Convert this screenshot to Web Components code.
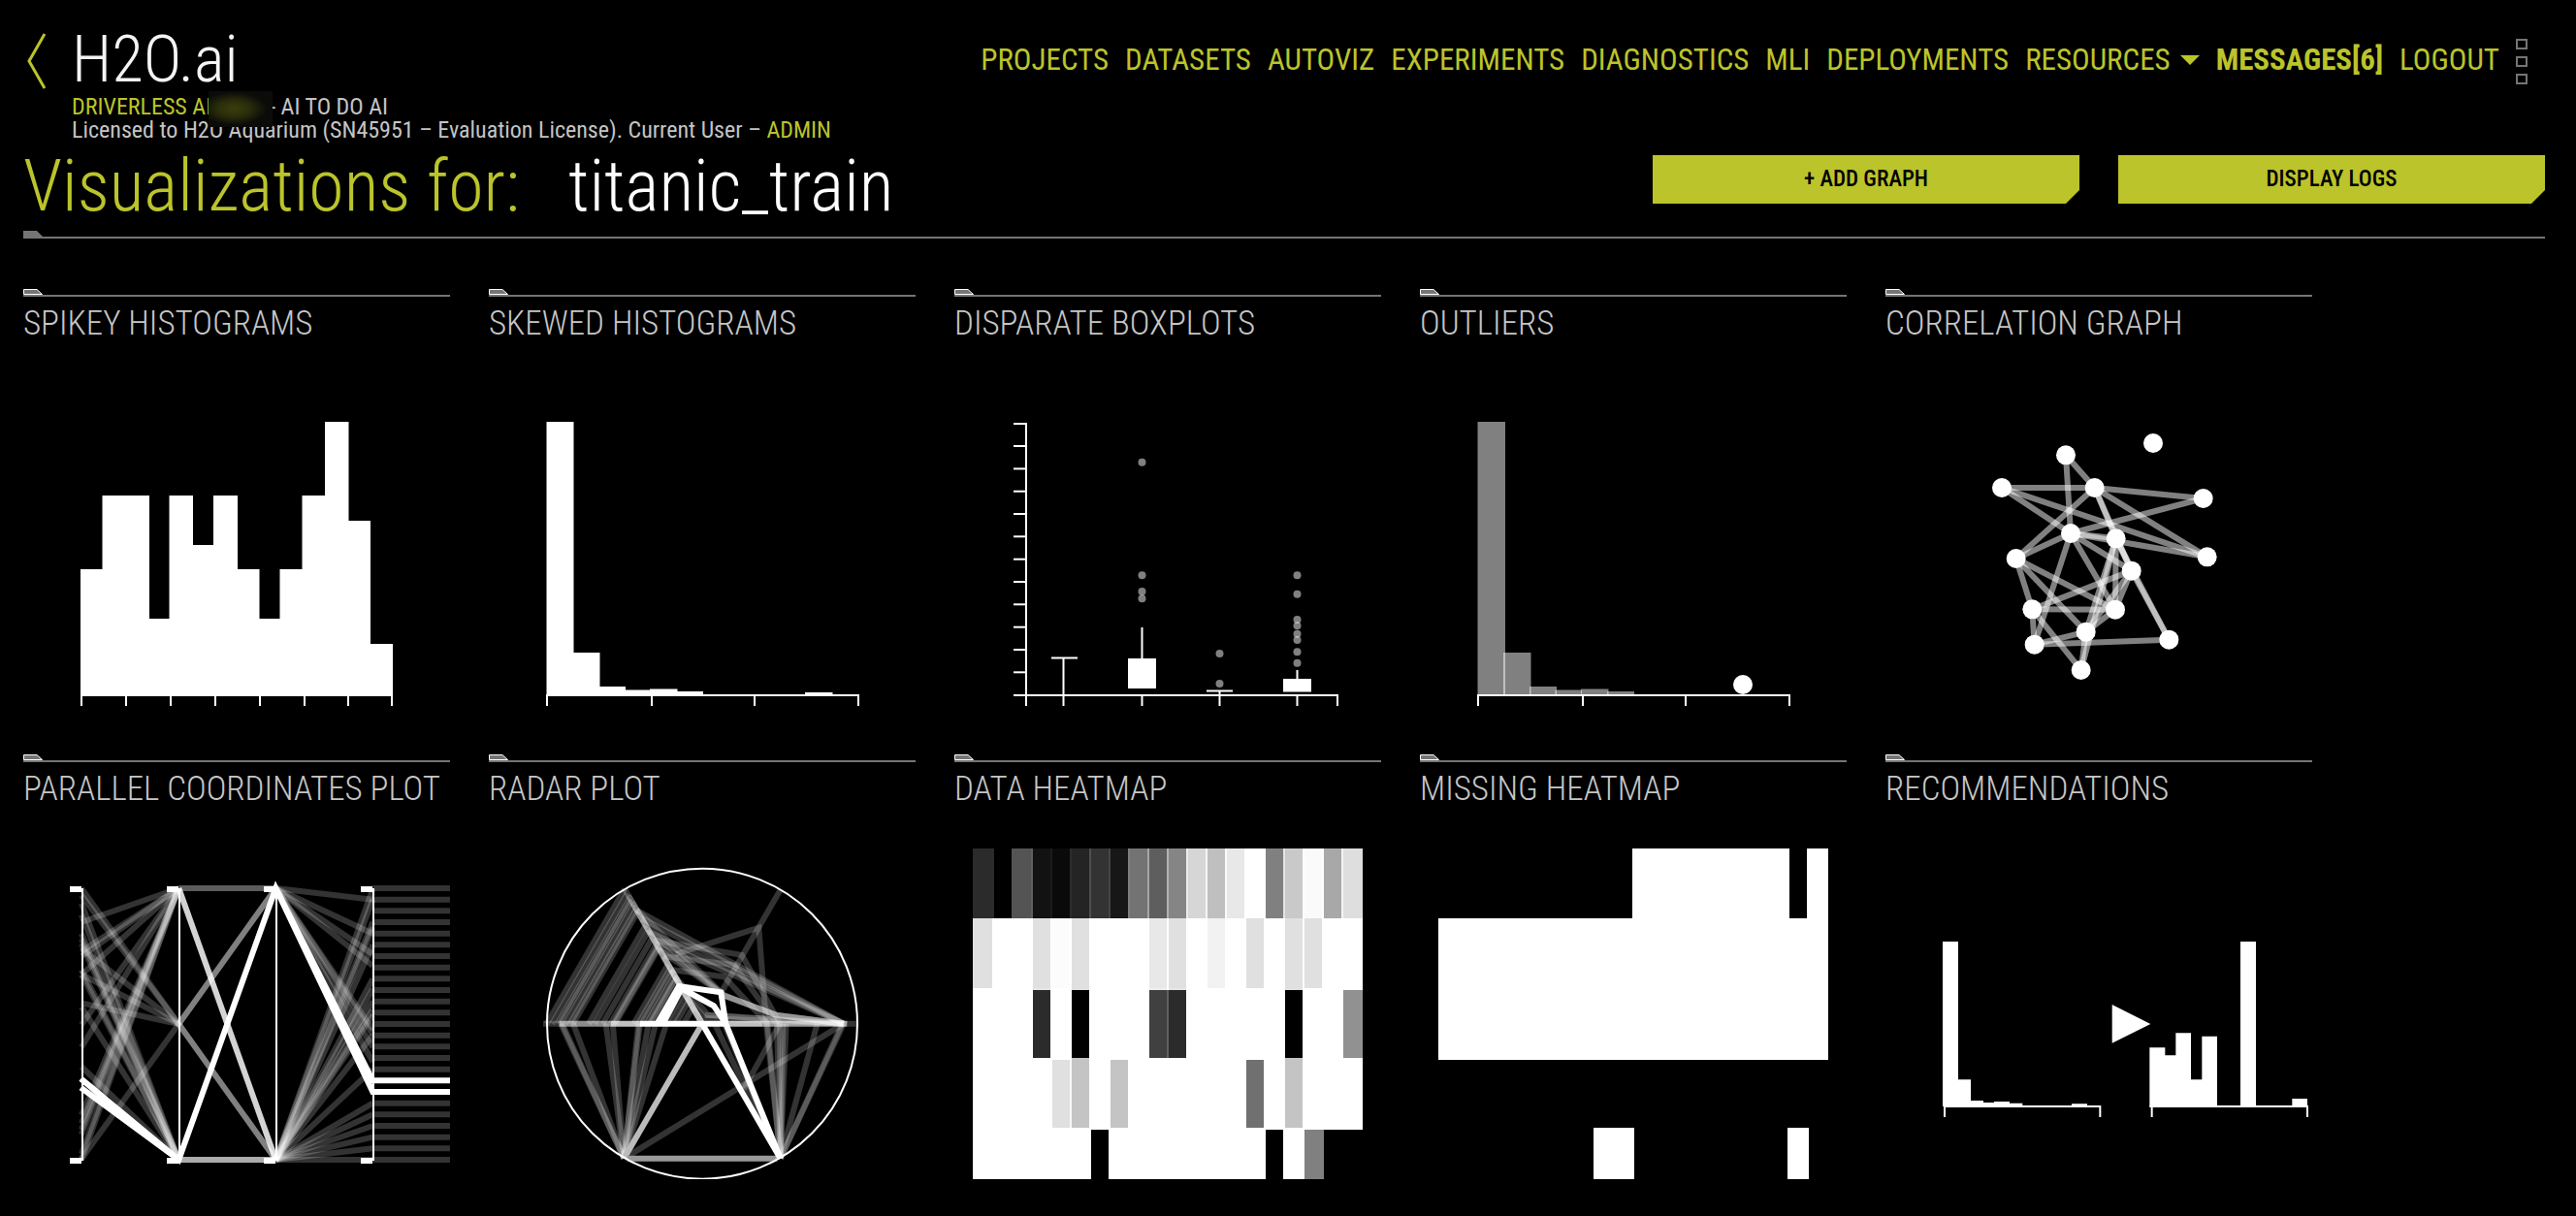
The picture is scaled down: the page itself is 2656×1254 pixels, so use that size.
<!DOCTYPE html>
<html lang="en">
<head>
<meta charset="utf-8">
<title>H2O Driverless AI – Visualizations</title>
<style>
  html { background: #000; }
  body {
    margin: 0;
    background: #000;
    color: #c4c4c4;
    font-family: "Roboto Condensed", Roboto, "Liberation Sans", sans-serif;
    --lime: #bbc42a;
    --line: #757575;
  }
</style>
</head>
<body>
<viz-page>
  <app-header slot="header"></app-header>
  <page-title slot="title" label="Visualizations for:" name="titanic_train">
    <action-button>+ ADD GRAPH</action-button>
    <action-button>DISPLAY LOGS</action-button>
  </page-title>
  <viz-card label="SPIKEY HISTOGRAMS" chart="spikey"></viz-card>
  <viz-card label="SKEWED HISTOGRAMS" chart="skewed"></viz-card>
  <viz-card label="DISPARATE BOXPLOTS" chart="boxplots"></viz-card>
  <viz-card label="OUTLIERS" chart="outliers"></viz-card>
  <viz-card label="CORRELATION GRAPH" chart="correlation"></viz-card>
  <viz-card label="PARALLEL COORDINATES PLOT" chart="parallel"></viz-card>
  <viz-card label="RADAR PLOT" chart="radar"></viz-card>
  <viz-card label="DATA HEATMAP" chart="heatmap"></viz-card>
  <viz-card label="MISSING HEATMAP" chart="missing"></viz-card>
  <viz-card label="RECOMMENDATIONS" chart="recommend"></viz-card>
</viz-page>

<script>
const base = (el, html) => { el.attachShadow({ mode: 'open' }).innerHTML = html; };

/* ---------- page frame ---------- */
customElements.define('viz-page', class extends HTMLElement {
  constructor() {
    super();
    base(this, `<style>
      :host { display: block; padding: 25px 32px 38px 24px; }
      main { display: grid; grid-template-columns: repeat(auto-fill, 440px); gap: 40px; padding-top: 50px; }
    </style>
    <slot name="header"></slot>
    <slot name="title"></slot>
    <main><slot></slot></main>`);
  }
});

/* ---------- header with brand and navigation ---------- */
customElements.define('app-header', class extends HTMLElement {
  constructor() {
    super();
    base(this, `<style>
      :host { display: flex; justify-content: space-between; align-items: flex-start; }
      .left { display: flex; align-items: flex-start; }
      .back { display: block; width: 50px; padding: 9px 0 0 4px; box-sizing: border-box; }
      .back svg { display: block; }
      h1 { margin: 0; color: #f4f4f4; font-size: 67px; line-height: 73px; font-weight: 300; }
      p { margin: 0; font-size: 24px; line-height: 24px; white-space: nowrap; }
      .lime, a { color: var(--lime); text-decoration: none; }
      .version { display: inline-block; position: relative; width: 60px; height: 24px; vertical-align: top; }
      .version::after {
        content: ""; position: absolute; left: -3px; top: -4px; width: 66px; height: 37px;
        background: radial-gradient(ellipse 34px 17px at 26px 18px, #3a3e0b 0, #2a2d0a 50%, #0b0b0a 100%);
      }
      nav { display: flex; align-items: flex-start; gap: 17px; padding: 19px 18px 0 0; font-size: 31px; line-height: 36px; }
      nav a, nav button { font-weight: 400; white-space: nowrap; }
      nav button { display: flex; align-items: center; gap: 10px; margin: 0; padding: 0; border: 0; background: none;
        color: var(--lime); font: inherit; cursor: pointer; }
      nav a.strong { font-weight: 700; }
      nav button.menu { align-self: flex-start; flex-direction: column; gap: 7px; margin-top: -4px; }
      .menu i { display: block; width: 12px; height: 11px; box-sizing: border-box; border: 2px solid var(--line); }
    </style>
    <div class="left">
      <a class="back" href="#" aria-label="Back"><svg width="20" height="58" viewBox="0 0 20 58" fill="none" stroke="#bbc42a" stroke-width="3"><path d="M18 1L2 29L18 57"/></svg></a>
      <div>
        <h1>H2O.ai</h1>
        <p><span class="lime">DRIVERLESS AI</span><span class="version"></span>- AI TO DO AI</p>
        <p>Licensed to H2O Aquarium (SN45951 – Evaluation License). Current User – <span class="lime">ADMIN</span></p>
      </div>
    </div>
    <nav>
      <a href="#">PROJECTS</a><a href="#">DATASETS</a><a href="#">AUTOVIZ</a><a href="#">EXPERIMENTS</a>
      <a href="#">DIAGNOSTICS</a><a href="#">MLI</a><a href="#">DEPLOYMENTS</a>
      <button type="button">RESOURCES<svg width="20" height="10" viewBox="0 0 20 10" fill="#bbc42a"><path d="M0 0H20L10 10Z"/></svg></button>
      <a class="strong" href="#">MESSAGES[6]</a><a href="#">LOGOUT</a>
      <button class="menu" type="button" aria-label="More"><i></i><i></i><i></i></button>
    </nav>`);
  }
});

/* ---------- title row ---------- */
customElements.define('page-title', class extends HTMLElement {
  connectedCallback() {
    base(this, `<style>
      :host { display: block; }
      .row { display: flex; justify-content: space-between; align-items: flex-start; }
      h2 { display: flex; gap: 50px; margin: 0; font-size: 74px; line-height: 92px; font-weight: 300; color: #fff; white-space: nowrap; }
      h2 span { color: var(--lime); }
      .actions { display: flex; gap: 40px; padding-top: 14px; }
      .rule { border-bottom: 2px solid var(--line); }
      .rule svg { display: block; }
    </style>
    <div class="row"><h2><span>${this.getAttribute('label')}</span>${this.getAttribute('name')}</h2>
    <div class="actions"><slot></slot></div></div>
    <div class="rule"><svg width="20" height="6" fill="#757575"><path d="M0 0H14L20 6H0Z"/></svg></div>`);
  }
});

customElements.define('action-button', class extends HTMLElement {
  constructor() {
    super();
    base(this, `<style>
      :host { display: block; width: 440px; }
      button { display: block; width: 100%; height: 50px; padding: 0; border: 0; background: var(--lime); color: #000;
        font: 500 23px/50px "Roboto Condensed", Roboto, "Liberation Sans", sans-serif; cursor: pointer;
        clip-path: polygon(0 0, 100% 0, 100% 36px, calc(100% - 14px) 100%, 0 100%); }
    </style><button type="button"><slot></slot></button>`);
  }
});

/* ---------- charts ---------- */
const poly = (pts, a) => `<path d="M${pts}" ${a}/>`;
const charts = {
  spikey() {
    let s = poly('59 422V291H81.5V215H130V342H150.5V215H175V266H196V215H221V291H243.5V342H264.5V291H287.5V215H311V139H335.5V241H358V368H381V422Z', 'fill="#fff"');
    for (const x of [60, 106, 152, 198, 244, 290, 335, 380]) s += poly(`${x} 420V432`, 'stroke="#fff" stroke-width="2"');
    return s;
  },
  axis3() {
    let s = poly('59 421H382', 'stroke="#fff" stroke-width="2"');
    for (const x of [60, 168, 274, 381]) s += poly(`${x} 420V432`, 'stroke="#fff" stroke-width="2"');
    return s;
  },
  skewed() {
    return poly('59.5 421V139H87.5V377H114.5V412H141V415.5H166V414.5H194.5V417H221V420H326V418H354.5V421Z', 'fill="#fff"') + charts.axis3();
  },
  outliers() {
    let s = '';
    for (const [a, b, t] of [[59.5, 88, 139], [86, 114.5, 377], [113, 141, 412], [139.5, 167, 415.5], [166, 194.5, 414.5], [193, 221, 417]])
      s += `<rect x="${a}" y="${t}" width="${b - a}" height="${421 - t}" fill="#fff" fill-opacity=".5"/>`;
    return s + charts.axis3() + '<circle cx="333" cy="410" r="10" fill="#fff"/>';
  },
  boxplots() {
    let s = '<g stroke="#fff" stroke-width="2" fill="none"><path d="M61 141H74V432M61 421H395V432M112.5 432V383M193.5 432V421M193.5 384V351M273.5 432V416M353.5 432V421M353.5 405V395M100 382.5H127M260 416.5H287"/>';
    for (let k = 1; k < 12; k++) s += `<path d="M61 ${(140.7 + 23.33 * k).toFixed(1)}H74"/>`;
    s += '</g><g fill="#fff"><path d="M179 383H208V414H179ZM339 404H368V417.5H339Z"/></g><g fill="#fff" fill-opacity=".5">';
    const d = { 193.5: [180.7, 297.3, 314, 321.3], 273.5: [378, 409], 353.5: [297.3, 316.7, 343, 349.3, 357.7, 364, 376.3, 387.7] };
    for (const x in d) for (const y of d[x]) s += `<circle cx="${x}" cy="${y}" r="4"/>`;
    return s + '</g>';
  },
  correlation() {
    const n = { A: [630, 568], B: [900, 531], C: [432, 669], D: [719, 669], E: [1055, 702], F: [645, 810], G: [785, 826], H: [1067, 883], I: [476, 888], J: [833, 926], K: [526, 1045], L: [783, 1046], M: [692, 1115], N: [533, 1154], O: [949, 1139], P: [677, 1233] };
    let s = '<g transform="translate(-24 -16) scale(.33333)"><g stroke="#fff" stroke-opacity=".5" stroke-width="18">';
    for (const e of 'AD AF CD CF CH DE DH DI DG DJ EF FG FH FI FJ FL FN GJ GL GM GP GO JO IK IM IL JK JL JM KL KN KP LM MN NO MP'.split(' '))
      s += `<path d="M${n[e[0]]}L${n[e[1]]}"/>`;
    s += '</g><g fill="#fff">';
    for (const k in n) s += `<circle cx="${n[k][0]}" cy="${n[k][1]}" r="30"/>`;
    return s + '</g></g>';
  },
  parallel() {
    const T = 468, B = 1308, M = 888;
    const ln = (x1, y1, x2, y2, o) => `<path d="M${x1} ${y1}L${x2} ${y2}" stroke-opacity="${o}"/>`;
    let s = '<g transform="translate(-24 -16) scale(.33333)" stroke="#fff" fill="none"><g stroke-width="18">';
    for (const y of [573, 663, 678, 735, 890, 960, 1170, 1195, 1215, 1230, 1290, 1308]) s += ln(252, y, 553, T, .2);
    for (const y of [468, 490, 655, 735, 823, 1305]) s += ln(252, y, 553, M, .2);
    for (const y of [515, 550, 608, 625, 640, 720, 735, 835, 1020]) s += ln(252, y, 553, B, .2);
    for (const y of [503, 608, 672, 708, 905, 920, 960, 1005]) s += ln(853, T, 1153, y, .2);
    for (const y of [470, 503, 573, 590, 643, 748, 780, 818, 845, 860, 923, 1028, 1133, 1168, 1203, 1238, 1273, 1308]) s += ln(853, B, 1153, y, .2);
    for (let k = 0; k < 25; k++) if (k !== 17 && k !== 18) s += ln(1153, T + 35 * k, 1392, T + 35 * k, .2);
    s += ln(553, T, 853, T, .36) + ln(553, B, 853, B, .67) + ln(553, M, 853, T, .5) + ln(553, M, 853, B, .5) + ln(553, T, 853, B, .83);
    s += '<path stroke-miterlimit="4" d="M250 1057L553 1308L853 468L1153 1063H1392M250 1085L553 1308L853 468L1153 1098H1392"/></g>';
    s += '<path stroke-width="6" d="M255 468V1311M555 468V1311M855 468V1311M1155 468V1311"/>';
    s += '<path stroke-width="18" d="M216 471H252M516 471H552M816 471H852M1116 471H1152M216 1311H252M516 1311H552M816 1311H852M1116 1311H1152"/>';
    return s + '</g>';
  },
  radar() {
    const L = t => `${732 - 481 * t} 887`, UL = t => `${732 - 240 * t} ${887 - 417 * t}`, R = t => `${732 + 481 * t} 887`;
    const LL = '490 1304', LR = '974 1304';
    const p = (...a) => `<path d="M${a.join('L')}"/>`;
    let s = '<g transform="translate(-24 -16) scale(.33333)" fill="none" stroke="#fff"><g stroke-width="18" stroke-opacity=".2" stroke-miterlimit="3">';
    for (const t of [1, .965, .93, .915, .88, .85, .83, .73, .69, .64, .59, .57, .56, .44, .41, .39, .36, .34, .33, .24, .2, .17, .12]) s += p(L(t), UL(t));
    for (const t of [.91, .9, .83, .62, .575, .41, .4, .345, .3, .23]) s += p(L(t), LL);
    for (const t of [1, .95, .9, .8, .5, .4]) s += p(UL(t), '732 887');
    for (const t of [.84, .78, .68, .62]) s += p(UL(t), R(.91));
    for (const t of [.85, .7, .6, .55]) s += p(UL(t), '800 800', '960 860', R(.91));
    s += p(UL(.62), '855 675', R(.5), LR) + p(UL(.5), '830 705', R(.48), LR) + p(UL(.4), '800 742', R(.42), LR);
    s += p('650 672', '907 590', '930 887', LR) + p('973 475', '785 800');
    s += p(UL(.35), '750 860', R(.91)) + p(UL(.2), '740 870', R(.91)) + p('740 860', R(.91), LR);
    for (const t of [.52, .54, .74, .9, .14]) s += p(R(t), LR);
    s += p(R(.91), LL) + p(R(.5), '860 1090') + p(R(.08), '920 1200');
    s += '</g><g stroke-width="18">';
    s += '<path stroke="#bbb" d="M732 887L490 1304"/><path stroke="#999" d="M500 1304H964"/>';
    s += '<path stroke-opacity=".2" d="M240 887H290M1180 887H1213"/><path stroke-opacity=".55" d="M290 887H450"/><path stroke-opacity=".75" d="M450 887H540M800 887H920"/><path stroke-opacity=".6" d="M920 887H1180"/>';
    s += '<path d="M540 887H800M590 892L660 771L790 790L805 887L974 1304L732 887M608 892L668 778L768 832L805 887"/></g>';
    s += '<circle cx="732" cy="887" r="480" stroke-width="6"/>';
    return s + '</g>';
  },
  cells(rows) {
    let s = '<g transform="translate(-24 -16) scale(.33333)" fill="#fff" shape-rendering="crispEdges">';
    rows.forEach((row, j) => row.forEach((v, i) => {
      if (v) s += `<rect x="${129 + 60 * i}" y="${345 + 216 * j}" width="66" height="${j ? 222 : 216}" fill-opacity="${v}"/>`;
    }));
    return s + '</g>';
  },
  heatmap() {
    return charts.cells([
      [.17, 0, .33, .07, .04, .14, .2, .09, .45, .37, .52, .84, .75, .91, 1, .5, .79, .98, .66, .87],
      [.88, 1, 1, .88, .99, .88, 1, 1, 1, .91, .88, 1, .95, 1, .88, 1, .88, .88, 1, 1],
      [1, 1, 1, .17, 1, 0, 1, 1, 1, .25, .17, 1, 1, 1, 1, 1, 0, 1, 1, .57],
      [1, 1, 1, 1, .88, .77, 1, .77, 1, 1, 1, 1, 1, 1, .44, 1, .77, 1, 1, 1],
      [1, 1, 1, 1, 1, 1, 0, 1, 1, 1, 1, 1, 1, 1, 1, 0, 1, .5, 0, 0]
    ]);
  },
  missing() {
    const row = f => Array.from({ length: 20 }, (_, i) => f(i) ? 1 : 0);
    return charts.cells([
      row(i => i > 9 && i !== 18), row(() => true), row(() => true), row(() => false), row(i => i === 8 || i === 9 || i === 18)
    ]);
  },
  recommend() {
    return `<g transform="translate(-24 -16) scale(.33333)" fill="#fff">
      <path d="M249 1143V633H297V1060H336V1125H375V1131H408V1128H456V1133H496V1140H648V1135H696V1143Z"/>
      <path d="M773 828L892 888L773 947Z"/>
      <path d="M889 1143V961H937V985H970V916H1017V1060H1051V926H1098V1143ZM1170 1143V633H1218V1143ZM1330 1143V1119H1377V1143Z"/>
      <path d="M252 1143H736V1176M255 1143V1176M889 1143H1377V1176M896 1143V1176" fill="none" stroke="#fff" stroke-width="6"/></g>`;
  }
};

customElements.define('viz-card', class extends HTMLElement {
  connectedCallback() {
    const label = this.getAttribute('label');
    base(this, `<style>
      :host { display: block; }
      section { display: flex; flex-direction: column; padding-top: 2px; }
      .rule { border-bottom: 2px solid var(--line); }
      svg { display: block; }
      .chart { width: 100%; height: auto; }
      h3 { margin: 0; padding-top: 5px; color: #c6c6c6; font-size: 35px; line-height: 45px; font-weight: 300; white-space: nowrap; }
    </style>
    <section>
      <div class="rule"><svg width="20" height="6"><path d="M.5 .5H14L19.5 5.5H.5Z" fill="#757575" stroke="#fff"/></svg></div>
      <h3>${label}</h3>
      <svg class="chart" viewBox="0 60 440 380" role="img" aria-label="${label}">${charts[this.getAttribute('chart')]()}</svg>
    </section>`);
  }
});
</script>
</body>
</html>
